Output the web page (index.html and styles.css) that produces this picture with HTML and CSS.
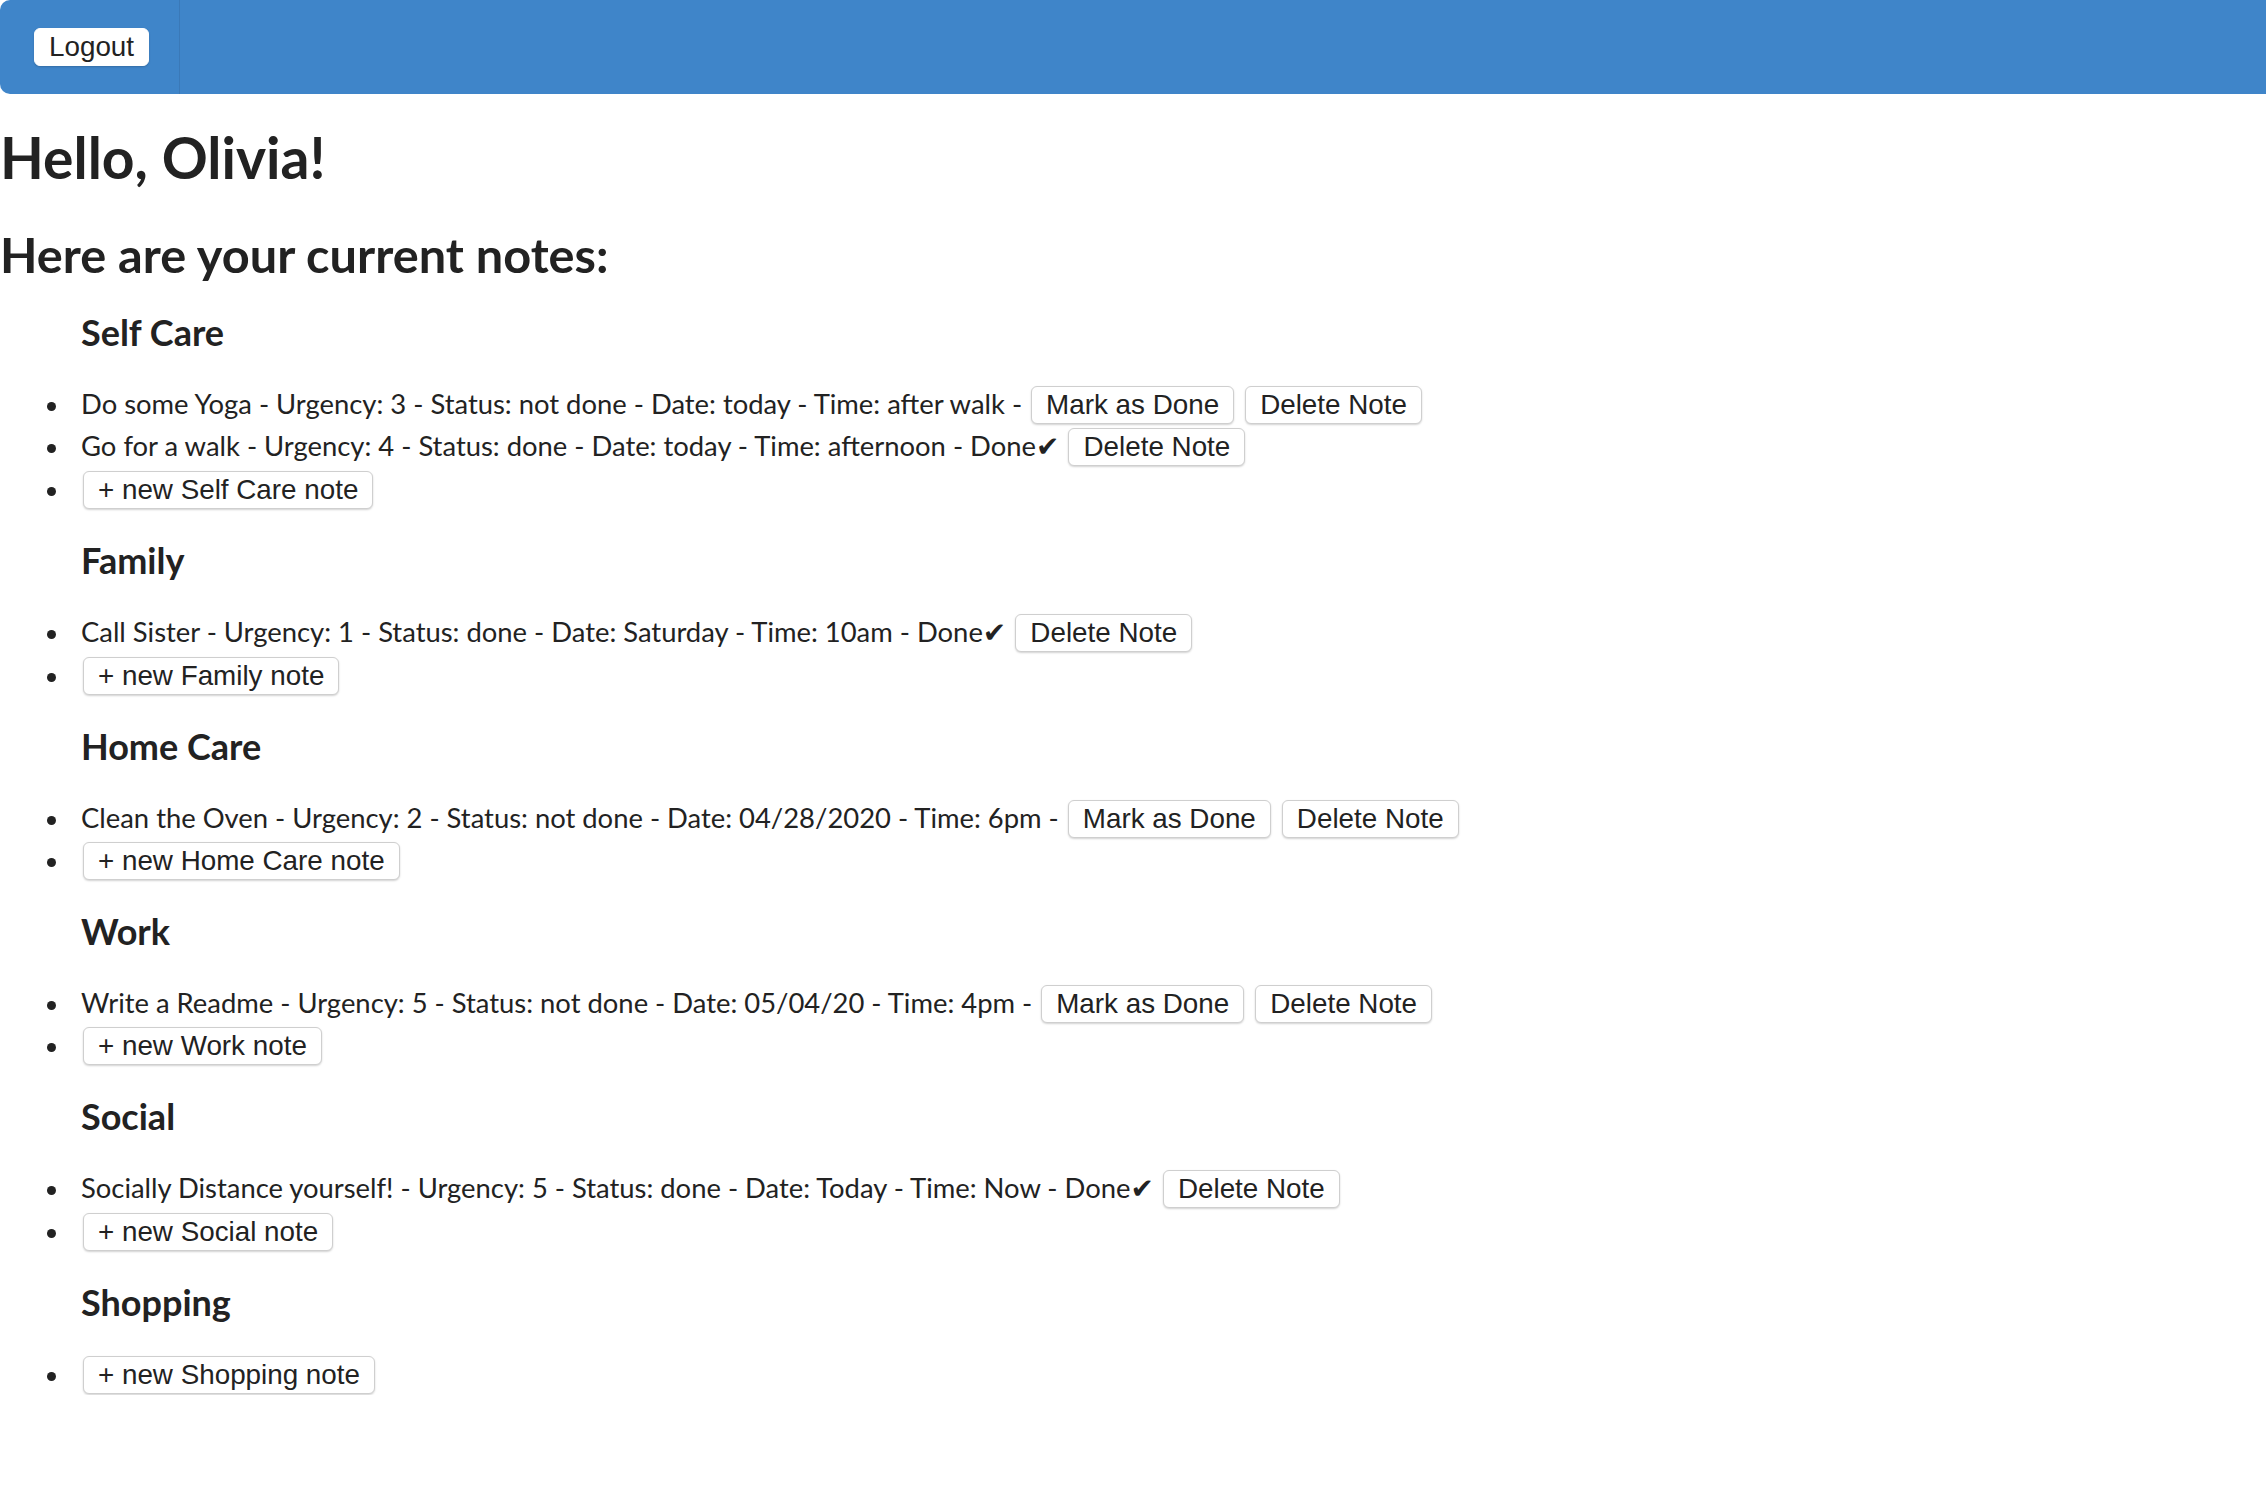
FILE: index.html
```html
<!DOCTYPE html>
<html lang="en">
<head>
<meta charset="utf-8">
<title>Notes</title>
<link rel="stylesheet" href="styles.css">
</head>
<body>
<header class="navbar">
  <div class="nav-left"><button class="btn">Logout</button></div>
  <div class="nav-rest"></div>
</header>
<main class="content">
  <h1 class="greeting">Hello, Olivia!</h1>
  <h2 class="subtitle">Here are your current notes:</h2>

  <section class="category">
    <h3 class="cat-title">Self Care</h3>
    <ul class="notes">
      <li>Do some Yoga - Urgency: 3 - Status: not done - Date: today - Time: after walk - <button class="btn">Mark as Done</button> <button class="btn">Delete Note</button></li>
      <li>Go for a walk - Urgency: 4 - Status: done - Date: today - Time: afternoon - Done<span class="check">✔</span> <button class="btn">Delete Note</button></li>
      <li><button class="btn">+ new Self Care note</button></li>
    </ul>
  </section>

  <section class="category">
    <h3 class="cat-title">Family</h3>
    <ul class="notes">
      <li>Call Sister - Urgency: 1 - Status: done - Date: Saturday - Time: 10am - Done<span class="check">✔</span> <button class="btn">Delete Note</button></li>
      <li><button class="btn">+ new Family note</button></li>
    </ul>
  </section>

  <section class="category">
    <h3 class="cat-title">Home Care</h3>
    <ul class="notes">
      <li>Clean the Oven - Urgency: 2 - Status: not done - Date: 04/28/2020 - Time: 6pm - <button class="btn">Mark as Done</button> <button class="btn">Delete Note</button></li>
      <li><button class="btn">+ new Home Care note</button></li>
    </ul>
  </section>

  <section class="category">
    <h3 class="cat-title">Work</h3>
    <ul class="notes">
      <li>Write a Readme - Urgency: 5 - Status: not done - Date: 05/04/20 - Time: 4pm - <button class="btn">Mark as Done</button> <button class="btn">Delete Note</button></li>
      <li><button class="btn">+ new Work note</button></li>
    </ul>
  </section>

  <section class="category">
    <h3 class="cat-title">Social</h3>
    <ul class="notes">
      <li>Socially Distance yourself! - Urgency: 5 - Status: done - Date: Today - Time: Now - Done<span class="check">✔</span> <button class="btn">Delete Note</button></li>
      <li><button class="btn">+ new Social note</button></li>
    </ul>
  </section>

  <section class="category">
    <h3 class="cat-title">Shopping</h3>
    <ul class="notes">
      <li><button class="btn">+ new Shopping note</button></li>
    </ul>
  </section>
</main>
</body>
</html>
```

FILE: styles.css
```css
html, body {
  margin: 0;
  padding: 0;
  background: #ffffff;
}

body {
  font-family: Lato, "Noto Sans", sans-serif;
  color: #222222;
}

.navbar {
  display: flex;
  height: 94px;
  background: #3f85c9;
  border-radius: 10px 0 0 10px;
}

.nav-left {
  width: 180px;
  display: flex;
  align-items: center;
  padding-left: 34px;
  box-sizing: border-box;
  border-right: 1px solid #3a79b8;
}

.nav-rest {
  flex: 1;
}

.btn {
  font-family: "Liberation Sans", Arial, sans-serif;
  font-size: 27.8px;
  line-height: 30px;
  color: #222222;
  background: #ffffff;
  border: 1px solid #cfcfcf;
  border-radius: 6px;
  box-shadow: 0 1px 2px rgba(0, 0, 0, 0.18);
  padding: 3px 14px;
  margin: 0 2px;
  vertical-align: baseline;
}

.nav-left .btn {
  margin: 0;
  border-color: #ffffff;
}

.content {
  padding: 0;
}

.greeting {
  font-size: 57px;
  font-weight: 700;
  line-height: 64px;
  margin: 31px 0 0;
}

.subtitle {
  font-size: 48.7px;
  font-weight: 700;
  line-height: 56px;
  margin: 37px 0 0;
}

.category {
  padding-left: 81px;
}

.cat-title {
  font-size: 36px;
  font-weight: 700;
  line-height: 42px;
  margin: 0;
  padding-top: 29px;
}

.notes {
  margin: 30px 0 0;
  padding: 0;
  font-size: 27.4px;
  line-height: 42px;
  list-style: none;
}

.notes li {
  position: relative;
}

.notes li::before {
  content: "";
  position: absolute;
  left: -34px;
  top: 19px;
  width: 9px;
  height: 9px;
  border-radius: 50%;
  background: #222222;
}

.check {
  font-family: "DejaVu Sans", sans-serif;
  font-size: 28px;
  font-weight: 700;
}
```
